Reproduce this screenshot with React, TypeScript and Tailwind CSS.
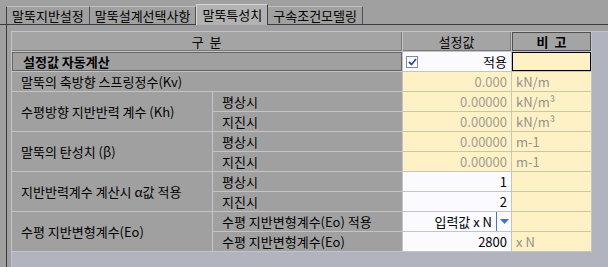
const font = { fontFamily: '"Noto Sans CJK KR", "Noto Sans", sans-serif' };

const tabs = ['말뚝지반설정', '말뚝설계선택사항', '말뚝특성치', '구속조건모델링'];

function Check() {
  return (
    <span className="flex h-[12px] w-[12px] items-center justify-center border border-[#7d8aa6] bg-white">
      <svg width="9" height="8" viewBox="0 0 9 8">
        <path d="M1 4 L3.5 6.5 L8 1" fill="none" stroke="#2c4d8e" strokeWidth="1.8" />
      </svg>
    </span>
  );
}

function Label({ children, span = false }: { children: React.ReactNode; span?: boolean }) {
  return (
    <div className={`flex items-center bg-[#a0a0a0] pl-[9px] text-black ${span ? 'row-span-2' : ''}`}>
      {children}
    </div>
  );
}

function Sub({ children }: { children: React.ReactNode }) {
  return <div className="flex items-center whitespace-nowrap bg-[#a0a0a0] pl-[9px] text-black">{children}</div>;
}

function Val({ v, white = false }: { v: string; white?: boolean }) {
  return (
    <div
      className={`flex items-center justify-end pr-[4px] ${
        white ? 'bg-[#fbfaff] text-black' : 'bg-[#fff1c6] text-[#a39d93]'
      }`}
    >
      {v}
    </div>
  );
}

function Note({ v = '' }: { v?: string }) {
  return <div className="flex items-center bg-[#fff1c6] pl-[4px] text-[#959189]">{v}</div>;
}

export default function App() {
  return (
    <div className="flex h-[267px] w-[608px] flex-col overflow-hidden bg-[#a0a0a0] text-[13px] leading-none" style={font}>
      {/* tab strip */}
      <div className="flex h-[25px] items-end border-b border-[#3c3c3c] pl-[6px]">
        {tabs.map((t, i) =>
          i === 2 ? (
            <div
              key={t}
              className="relative z-10 -mb-px flex h-[21px] items-center border-l border-r border-t border-l-[#d8d8d8] border-r-[#404040] border-t-[#d8d8d8] bg-[#b2b2b2] px-[5px] pb-[2px]"
            >
              {t}
            </div>
          ) : (
            <div
              key={t}
              className={`flex h-[18px] items-center border-t border-r border-t-[#c4c4c4] border-r-[#505050] px-[5px] pb-[1px] ${
                i === 0 ? 'border-l border-l-[#404040]' : ''
              }`}
            >
              {t}
            </div>
          )
        )}
      </div>

      {/* panel */}
      <div className="ml-[6px] flex flex-1 flex-col border-l border-[#3c3c3c] pl-[4px] pt-[6px]">
        <div className="flex-1 border-l border-t border-[#c2c4ca] bg-[#b1b4bf]">
          <div className="grid w-fit grid-cols-[200px_189px_108px_79px] grid-rows-[repeat(11,19px)] gap-px border-b border-r border-[#c4c4c4] bg-[#c4c4c4]">
            {/* header */}
            <div className="col-span-2 flex items-center justify-center border-b border-r border-[#7a7a7a] bg-[#a4a4a4]">
              구&nbsp;&nbsp;분
            </div>
            <div className="flex items-center justify-center border-b border-r border-[#7a7a7a] bg-[#a4a4a4]">설정값</div>
            <div className="flex items-center justify-center border border-[#505050] bg-[#a4a4a4] font-bold">
              비&nbsp;&nbsp;고
            </div>

            {/* auto calc */}
            <div className="col-span-2 flex items-center border border-[#666] bg-[#a0a0a0] pl-[10px] font-bold">
              설정값 자동계산
            </div>
            <div className="flex items-center justify-between bg-[#fbfaff] pl-[3px] pr-[4px]">
              <Check />
              <span>적용</span>
            </div>
            <div className="border border-black bg-[#fff1c6]" />

            {/* Kv */}
            <div className="col-span-2 flex items-center bg-[#a0a0a0] pl-[9px]">말뚝의 축방향 스프링정수(Kv)</div>
            <Val v="0.000" />
            <Note v="kN/m" />

            {/* Kh */}
            <Label span>수평방향 지반반력 계수 (Kh)</Label>
            <Sub>평상시</Sub>
            <Val v="0.00000" />
            <Note v="kN/m³" />
            <Sub>지진시</Sub>
            <Val v="0.00000" />
            <Note v="kN/m³" />

            {/* beta */}
            <Label span>말뚝의 탄성치 (β)</Label>
            <Sub>평상시</Sub>
            <Val v="0.00000" />
            <Note v="m-1" />
            <Sub>지진시</Sub>
            <Val v="0.00000" />
            <Note v="m-1" />

            {/* alpha */}
            <Label span>지반반력계수 계산시 α값 적용</Label>
            <Sub>평상시</Sub>
            <Val v="1" white />
            <Note />
            <Sub>지진시</Sub>
            <Val v="2" white />
            <Note />

            {/* Eo */}
            <Label span>수평 지반변형계수(Eo)</Label>
            <Sub>수평 지반변형계수(Eo) 적용</Sub>
            <div className="flex items-center justify-end bg-[#fbfaff]">
              <span className="pr-[4px]">입력값 x N</span>
              <span className="flex h-full w-[15px] items-center justify-center border-l border-[#3a7bd0]">
                <svg width="9" height="5" viewBox="0 0 9 5">
                  <path d="M0 0 H9 L4.5 5 Z" fill="#2e7bd1" />
                </svg>
              </span>
            </div>
            <Note />
            <Sub>수평 지반변형계수(Eo)</Sub>
            <Val v="2800" white />
            <Note v="x N" />
          </div>
        </div>
      </div>
    </div>
  );
}
